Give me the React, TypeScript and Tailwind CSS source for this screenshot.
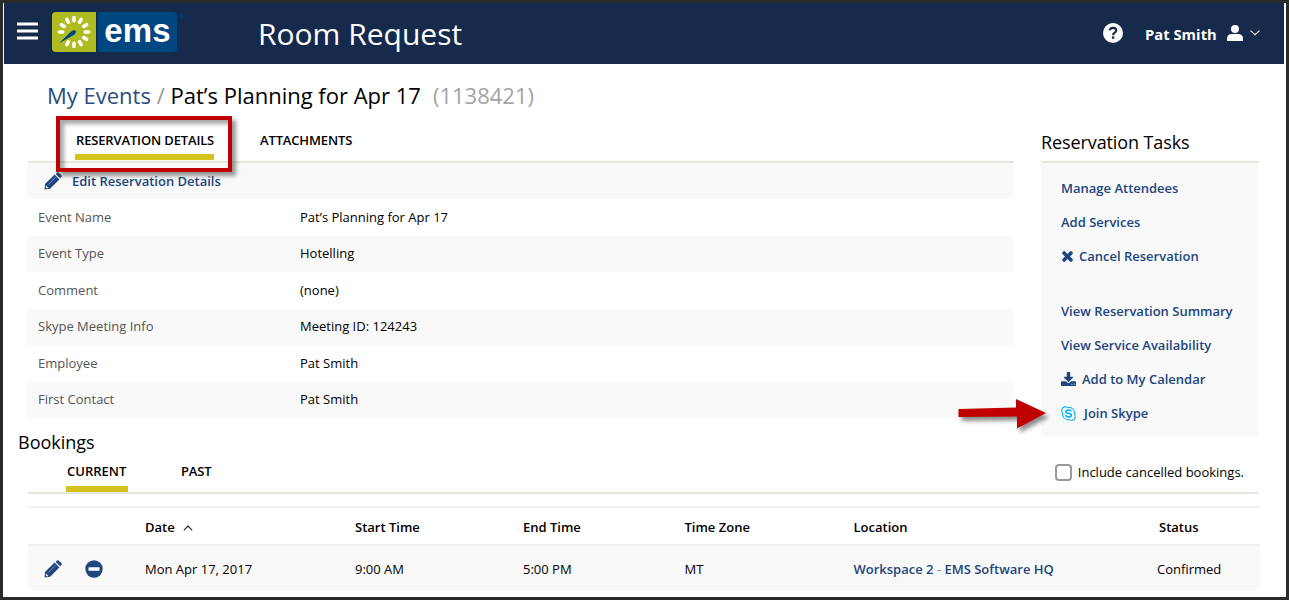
import React from "react";

const LINK = "text-[#20457f] font-semibold";

function Pencil({ className = "" }: { className?: string }) {
  return (
    <svg viewBox="0 0 18 18" className={`w-[18px] h-[18px] shrink-0 ${className}`} fill="#20457f">
      <path d="M10.6 2.6 L15.4 7.4 L6.1 16.7 L0.6 17.6 L1 12.1 Z" />
      <path d="M11.6 1.9 L13 0.5 Q13.8 -0.1 14.6 0.5 L17.4 3.3 Q18 4.1 17.4 4.9 L16.1 6.3 Z" />
      <path d="M4.2 12.6 L11.4 5.4" stroke="#a9b9d1" strokeWidth="0.7" />
      <path d="M2 13.6 L4.5 16.1 L2.9 16.5 L1.7 15.3 Z" fill="#f5f7fa" />
    </svg>
  );
}

function Logo() {
  const rays = [0, 30, 60, 90, 120, 150, 180, 210, 270, 300, 330];
  return (
    <div className="relative flex w-[125px] h-10 shrink-0">
      <svg viewBox="0 0 44 40" className="w-11 h-10 shrink-0">
        <path d="M4 0H44V40H4Q0 40 0 36V4Q0 0 4 0Z" fill="#afbd22" />
        {rays.map((a) => (
          <line key={a} x1="22" y1="5.5" x2="22" y2="8.7" stroke="#fff" strokeWidth="3.6" strokeLinecap="round" transform={`rotate(${a} 22 20)`} />
        ))}
        <path d="M7 31.3 L18.8 19.8 Q22 17.4 24 18.9 Q24.6 20.7 22.2 22.8 Z" fill="#004680" />
      </svg>
      <div className="ml-[2px] w-[79px] h-10 rounded-r bg-[#004680] flex items-center justify-center">
        <span className="font-['Liberation_Sans',sans-serif] font-bold text-white text-[33px] leading-8 tracking-[0.1px] -mt-[3px]">ems</span>
      </div>
      <span className="absolute left-[127px] top-[1px] text-[7px] leading-2 text-[#004680]">®</span>
    </div>
  );
}

const details = [
  ["Event Name", "Pat’s Planning for Apr 17"],
  ["Event Type", "Hotelling"],
  ["Comment", "(none)"],
  ["Skype Meeting Info", "Meeting ID: 124243"],
  ["Employee", "Pat Smith"],
  ["First Contact", "Pat Smith"],
];

export default function App() {
  return (
    <div className="w-[1289px] h-[600px] bg-[#2b2a2b] p-[3px] overflow-hidden font-['Open_Sans','Noto_Sans',sans-serif] text-[13px] text-black">
      <div className="relative w-[1283px] h-[594px] bg-white overflow-hidden">
        <header className="ml-px w-[1280px] h-[61px] bg-[#162a4b] flex items-center pl-[13px] text-white">
          <svg viewBox="0 0 21 18" className="w-[21px] h-[18px] shrink-0 -mt-[5px]" fill="#fff">
            <rect y="0.5" width="21" height="3" rx="0.5" />
            <rect y="7.5" width="21" height="3" rx="0.5" />
            <rect y="14.5" width="21" height="3" rx="0.5" />
          </svg>
          <div className="ml-[14px] -mt-[3px]"><Logo /></div>
          <h1 className="ml-[81px] mt-px text-[30px] leading-10 w-[300px]">Room Request</h1>
          <div className="ml-auto mr-6 flex items-center -mt-[2px]">
            <svg viewBox="0 0 20 20" className="w-5 h-5">
              <circle cx="10" cy="10" r="10" fill="#fff" />
              <path d="M6.7 7.4 Q7.1 4.8 10 4.8 Q13.2 4.8 13.2 7.4 Q13.2 8.8 11.5 9.9 Q10.1 10.8 10.1 12.2" fill="none" stroke="#162a4b" strokeWidth="2.2" />
              <rect x="8.9" y="13.4" width="2.4" height="2.4" fill="#162a4b" />
            </svg>
            <span className="ml-[22px] mt-[2px] text-[14.7px] tracking-[0.05px] font-bold leading-5 w-[82px] whitespace-nowrap">Pat Smith</span>
            <svg viewBox="0 0 16 16" className="w-4 h-4" fill="#fff">
              <circle cx="8" cy="4" r="4" />
              <path d="M0 16V14Q0 9 5 9H11Q16 9 16 14V16Z" />
            </svg>
            <svg viewBox="0 0 10 6" className="ml-[7px] w-[10px] h-[6px]" fill="none" stroke="#fff" strokeWidth="1.1"><path d="M0.5 0.7 L5 4.7 L9.5 0.7" /></svg>
          </div>
        </header>

        <div className="h-[49px] pl-[44px] pt-[15px] text-[22px] leading-8 whitespace-pre">
          <span className="text-[#2b4c83]">My Events</span><span className="text-[#999]"> / </span><span>Pat’s Planning for Apr 17</span><span className="ml-[12px] text-[#a3a3a3]">(1138421)</span>
        </div>

        <div className="pl-6 flex h-[308px]">
          <section className="relative w-[987px]">
            <nav className="ml-px h-[50px] border-b-2 border-[#e6e6df] flex pl-[47px] font-semibold leading-5 tracking-[-0.15px]">
              <div className="w-[139px] pt-[17px] h-12 flex flex-col justify-between whitespace-nowrap">
                <span className="ml-px">RESERVATION DETAILS</span>
                <i className="block h-[6px] mb-px w-[139px] bg-[#d2c41d]" />
              </div>
              <span className="ml-[46px] pt-[17px]">ATTACHMENTS</span>
            </nav>
            <div className={`w-[986px] h-[36px] bg-[#f9f9f9] flex items-center pl-[17px] pt-px ${LINK}`}>
              <Pencil className="-mt-px" />
              <span className="ml-[10px]">Edit Reservation Details</span>
            </div>
            {details.map(([k, v], i) => (
              <div key={k} className={`w-[986px] h-[36.5px] flex items-center pl-[11px] ${i % 2 ? "bg-[#f9f9f9]" : "bg-white"}`}>
                <span className="w-[262px] text-[#555]">{k}</span>
                <span>{v}</span>
              </div>
            ))}
            <div className="absolute left-[29px] top-[3px] w-[176px] h-[56px] border-4 border-[#c00000] shadow-[4px_4px_4px_rgba(0,0,0,.4),inset_4px_4px_4px_rgba(0,0,0,.35)]" />
          </section>

          <aside className="ml-[27px] w-[218px]">
            <h2 className="h-[50px] border-b-2 border-[#e6e6df] text-[18px] leading-6 pt-[17px] tracking-[-0.1px]">Reservation Tasks</h2>
            <div className={`w-[217px] h-[274px] bg-[#f9f9f9] pl-5 pt-[9px] whitespace-nowrap ${LINK}`}>
              <div className="h-[34px] flex items-center">Manage Attendees</div>
              <div className="h-[34px] flex items-center">Add Services</div>
              <div className="h-[34px] mb-[21px] flex items-center">
                <svg viewBox="302 358 1188 1196" className="ml-px -mt-px w-[11px] h-[11px]" fill="#20457f"><path d="M1490 1322q0 40-28 68l-136 136q-28 28-68 28t-68-28l-294-294-294 294q-28 28-68 28t-68-28l-136-136q-28-28-28-68t28-68l294-294-294-294q-28-28-28-68t28-68l136-136q28-28 68-28t68 28l294 294 294-294q28-28 68-28t68 28l136 136q28 28 28 68t-28 68l-294 294 294 294q28 28 28 68z" /></svg>
                <span className="ml-[6px]">Cancel Reservation</span>
              </div>
              <div className="h-[34px] flex items-center">View Reservation Summary</div>
              <div className="h-[34px] flex items-center">View Service Availability</div>
              <div className="h-[34px] flex items-center">
                <svg viewBox="64 0 1664 1536" className="-mt-[2px] w-[15px] h-[14px]" fill="#20457f"><path d="M1344 1344q0-26-19-45t-45-19-45 19-19 45 19 45 45 19 45-19 19-45zm256 0q0-26-19-45t-45-19-45 19-19 45 19 45 45 19 45-19 19-45zm128-224v320q0 40-28 68t-68 28h-1472q-40 0-68-28t-28-68v-320q0-40 28-68t68-28h465l135 136q58 56 136 56t136-56l136-136h464q40 0 68 28t28 68zm-325-569q17 41-14 70l-448 448q-18 19-45 19t-45-19l-448-448q-31-29-14-70 17-39 59-39h256v-448q0-26 19-45t45-19h256q26 0 45 19t19 45v448h256q42 0 59 39z" /></svg>
                <span className="ml-[6px]">Add to My Calendar</span>
              </div>
              <div className="h-[34px] flex items-center">
                <svg viewBox="0 0 16 16" className="-mt-px w-[15px] h-[15px]" fill="none" stroke="#00aff0">
                  <path d="M4.5 0.8Q6 0.8 7 1.5Q10.5 1 12.8 3.2Q15 5.5 14.5 9Q15.3 10.3 15.2 11.7Q14.8 15 11.5 15.2Q10 15.2 9 14.5Q5.500 15 3.200 12.800Q1 10.500 1.500 7Q0.700 5.700 0.800 4.300Q1.200 1 4.500 0.800Z" strokeWidth="1.1" />
                  <path d="M11 5.700Q10.300 4.300 8 4.300Q5.200 4.400 5.200 6Q5.200 7.300 8 7.800Q11 8.400 11 10Q10.800 11.800 8 11.800Q5.500 11.700 4.900 10" strokeWidth="1.7" />
                </svg>
                <span className="ml-[8px]">Join Skype</span>
              </div>
            </div>
          </aside>
        </div>

        <h2 className="pl-[15px] pt-[9px] h-[36px] text-[18px] leading-6">Bookings</h2>
        <nav className="ml-[25px] w-[1230px] h-[37px] border-b-2 border-[#e6e6df] flex pl-[38px] font-semibold leading-5">
          <div className="w-[62px] h-[35px] pt-[4px] flex flex-col justify-between">
            <span className="ml-px">CURRENT</span>
            <i className="block h-[6px] bg-[#d2c41d]" />
          </div>
          <span className="ml-[53px] pt-[4px] tracking-[-0.15px]">PAST</span>
          <label className="ml-auto mr-[14px] mt-[5px] h-5 flex items-center font-normal">
            <span className="w-[17px] h-[17px] rounded-[4px] border-2 border-[#999] bg-white mr-[6px]" />
            Include cancelled bookings.
          </label>
        </nav>

        <div className="ml-[25px] mt-[12px] w-[1232px]">
          <div className="h-[40px] pt-[3px] border-y-2 border-[#f1f1f1] grid grid-cols-[117px_210px_168px_161.500px_169px_305.500px_1fr] items-center font-semibold">
            <span />
            <span className="flex items-center">Date<svg viewBox="0 0 10 6" className="ml-[8px] w-[10px] h-[6px]" fill="none" stroke="#222" strokeWidth="1.1"><path d="M0.800 5.300 L5 1 L9.200 5.300" /></svg></span>
            <span>Start Time</span><span>End Time</span><span>Time Zone</span><span>Location</span><span>Status</span>
          </div>
          <div className="h-[45px] pt-[2px] bg-[#f9f9f9] grid grid-cols-[117px_210px_168px_161.500px_169px_303.500px_1fr] items-center">
            <span className="flex items-center pl-[16px] -mt-[2px]">
              <Pencil />
              <svg viewBox="0 0 18 18" className="ml-[22.5px] w-[18px] h-[18px]"><circle cx="9" cy="9" r="8.700" fill="#20457f" /><rect x="3.500" y="7.300" width="11" height="3.400" rx="0.500" fill="#fff" /></svg>
            </span>
            <span>Mon Apr 17, 2017</span><span>9:00 AM</span><span>5:00 PM</span><span>MT</span>
            <span className="text-[#20457f] font-semibold">Workspace 2 <span className="font-normal text-[#888]">-</span> EMS Software HQ</span>
            <span>Confirmed</span>
          </div>
        </div>

        <svg viewBox="0 0 100 50" className="absolute left-[947px] top-[387px] w-[100px] h-[50px] drop-shadow-[3px_4px_2px_rgba(0,0,0,.45)]">
          <path d="M11.500 21.500 L69 20 V11.500 L99 25.500 L70 41 V29 L11.500 29.500 Z" transform="translate(-3 -2.500)" fill="#c00000" />
        </svg>
      </div>
    </div>
  );
}
